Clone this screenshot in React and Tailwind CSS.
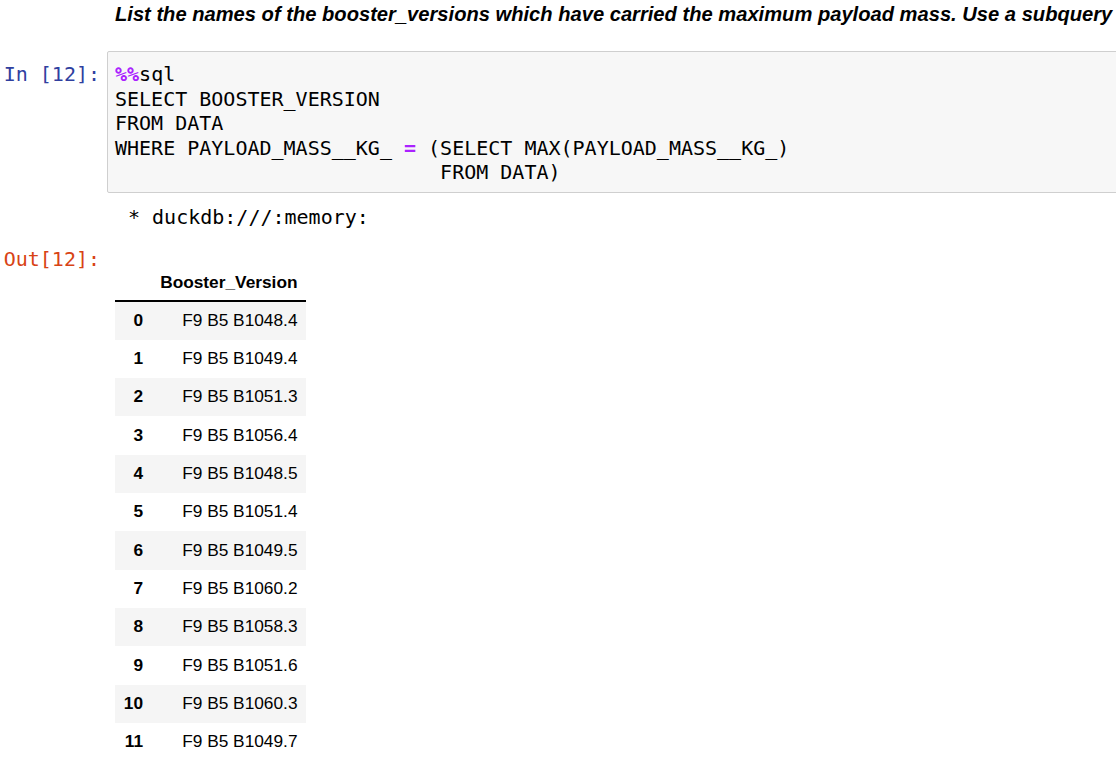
import React from 'react';

const rows = [
  'F9 B5 B1048.4',
  'F9 B5 B1049.4',
  'F9 B5 B1051.3',
  'F9 B5 B1056.4',
  'F9 B5 B1048.5',
  'F9 B5 B1051.4',
  'F9 B5 B1049.5',
  'F9 B5 B1060.2',
  'F9 B5 B1058.3',
  'F9 B5 B1051.6',
  'F9 B5 B1060.3',
  'F9 B5 B1049.7',
];

const mono = "font-['DejaVu_Sans_Mono',monospace] text-[20px] leading-[24.5px]";

export default function App() {
  return (
    <div className="w-[1116px] h-[758px] overflow-hidden bg-white text-black">
      {/* markdown cell */}
      <div className="pl-[115px] pt-[3px]">
        <p className="whitespace-nowrap font-['Liberation_Sans',Arial,sans-serif] text-[20.15px] leading-[23px] font-bold italic">
          List the names of the booster_versions which have carried the maximum payload mass. Use a subquery
        </p>
      </div>

      {/* code cell */}
      <div className="mt-[25px] flex">
        <div className={`w-[107px] shrink-0 pt-[11px] pr-[7px] text-right whitespace-pre text-[#303f9f] ${mono} text-[20.3px]`}>In [12]:</div>
        <div className={`w-[1020px] shrink-0 rounded-[2px] border border-[#cfcfcf] bg-[#f7f7f7] pt-[10px] pb-[7.5px] pl-[7px] whitespace-pre ${mono}`}>
          <div><span className="font-bold text-[#aa22ff]">%%</span>sql</div>
          <div>SELECT BOOSTER_VERSION</div>
          <div>FROM DATA</div>
          <div>WHERE PAYLOAD_MASS__KG_ <span className="font-bold text-[#aa22ff]">=</span> (SELECT MAX(PAYLOAD_MASS__KG_)</div>
          <div>                           FROM DATA)</div>
        </div>
      </div>

      {/* stream output */}
      <div className="mt-[11.5px] flex">
        <div className="w-[107px] shrink-0" />
        <div className={`pl-[21px] whitespace-pre ${mono}`}>* duckdb:///:memory:</div>
      </div>

      {/* execute result */}
      <div className="mt-[18px] flex">
        <div className={`w-[107px] shrink-0 pr-[7px] text-right whitespace-pre text-[#d84315] ${mono} text-[20.3px]`}>Out[12]:</div>
        <div className="ml-[8px] mt-[18.5px] w-[191px] font-['Liberation_Sans',Arial,sans-serif] text-[17.3px]">
          <div className="flex h-[36px] items-center border-b-2 border-black font-bold">
            <div className="w-[36.5px] shrink-0" />
            <div className="flex-1 pr-[8.5px] text-right">Booster_Version</div>
          </div>
          {rows.map((v, i) => (
            <div key={i} className={`flex h-[38.33px] items-center ${i % 2 === 0 ? 'bg-[#f5f5f5]' : 'bg-white'}`}>
              <div className="w-[36.5px] shrink-0 pr-[8.5px] text-right font-bold">{i}</div>
              <div className="flex-1 pr-[8.5px] text-right">{v}</div>
            </div>
          ))}
        </div>
      </div>
    </div>
  );
}
